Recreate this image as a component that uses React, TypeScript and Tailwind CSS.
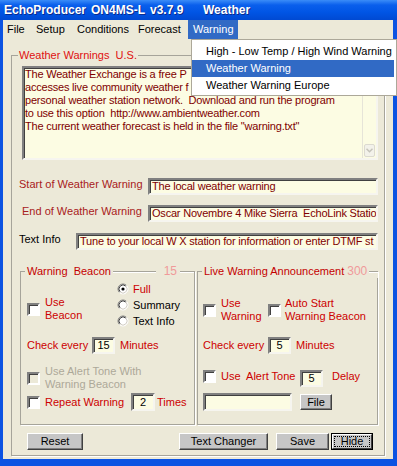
import type { ReactNode } from 'react'

function Sunken({ className = '', children }: { className?: string; children?: ReactNode }) {
  return (
    <div
      className={`border-2 border-t-[#808080] border-l-[#808080] border-r-[#f6f5ef] border-b-[#f6f5ef] bg-[#fcfce3] shadow-[inset_1px_1px_0_#404040] ${className}`}
    >
      {children}
    </div>
  )
}

function Check({ disabled = false }: { disabled?: boolean }) {
  return (
    <span
      className={`block w-[13px] h-[13px] shrink-0 border-2 border-t-[#808080] border-l-[#808080] border-r-white border-b-white shadow-[inset_1px_1px_0_#404040] ${
        disabled ? 'bg-[#ece9d8]' : 'bg-white'
      }`}
    />
  )
}

function Radio({ checked = false }: { checked?: boolean }) {
  return (
    <svg width="12" height="12" viewBox="0 0 12 12" className="shrink-0">
      <circle cx="6" cy="6" r="4.5" fill="#fff" />
      <path d="M2.46 9.54 A5 5 0 0 1 9.54 2.46" stroke="#808080" fill="none" />
      <path d="M3.17 8.83 A4 4 0 0 1 8.83 3.17" stroke="#404040" fill="none" />
      <path d="M9.54 2.46 A5 5 0 0 1 2.46 9.54" stroke="#ffffff" fill="none" />
      <path d="M8.83 3.17 A4 4 0 0 1 3.17 8.83" stroke="#d4d0c8" fill="none" />
      {checked && <circle cx="6" cy="6" r="1.6" fill="#000" />}
    </svg>
  )
}

function Btn({ className = '', children }: { className?: string; children: ReactNode }) {
  return (
    <div
      className={`flex items-center justify-center bg-[#c6c6c6] border border-t-white border-l-white border-r-[#404040] border-b-[#404040] shadow-[inset_-1px_-1px_0_#808080] text-black ${className}`}
    >
      {children}
    </div>
  )
}

function Line({ className = '' }: { className?: string }) {
  return <span className={`mt-[6px] h-[2px] border-t border-t-[#a6a49a] border-b border-b-white ${className}`} />
}

// the first two lines run on under the open Warning menu
const notes = [
  'The Weather Exchange is a free P',
  'accesses live community weather f',
  'personal weather station network.  Download and run the program',
  'to use this option  http://www.ambientweather.com',
  'The current weather forecast is held in the file "warning.txt"',
]

export default function App() {
  return (
    <div className="relative w-[397px] h-[466px] overflow-hidden flex flex-col bg-[#0c53e2] font-['Liberation_Sans',Arial,sans-serif] text-[11px] leading-[13px] text-black">
      {/* Title bar */}
      <div className="h-[20px] shrink-0 flex items-center pl-[4px] bg-[linear-gradient(180deg,#3a8cf8_0%,#0a5fec_25%,#0055e5_60%,#0049d2_100%)] text-white font-bold text-[12px] [text-shadow:1px_1px_0_#0b2b8c]">
        <span className="w-[87px]">EchoProducer</span>
        <span className="w-[59px]">ON4MS-L</span>
        <span className="w-[53px]">v3.7.9</span>
        <span>Weather</span>
      </div>

      <div className="flex-1 flex flex-col ml-[3px] mr-[4px] mb-[7px] bg-[#ece9d8]">
        {/* Menu */}
        <div className="h-[19px] shrink-0 flex items-stretch">
          <div className="w-[27px] pl-[4px] flex items-center">File</div>
          <div className="w-[41px] pl-[6px] flex items-center">Setup</div>
          <div className="w-[61px] pl-[6px] flex items-center">Conditions</div>
          <div className="w-[56px] pl-[6px] flex items-center">Forecast</div>
          <div className="w-[50px] pl-[5px] flex items-center bg-[#316ac5] text-white">Warning</div>
        </div>

        {/* Weather Warnings U.S. */}
        <fieldset className="mx-[8px] mt-[10px] min-w-0 border border-[#a6a49a] shadow-[1px_1px_0_#fff] px-[6px] pb-[5px]">
          <legend className="px-[1px] text-[#e01010] whitespace-pre">Weather Warnings  U.S.</legend>

          <Sunken className="mt-[4px] ml-[4px] h-[94px] flex">
            <div className="flex-1 overflow-hidden pl-[1px] text-[#800000] whitespace-pre tracking-[-0.2px]">
              {notes.map((n) => (
                <div key={n}>{n}</div>
              ))}
            </div>
            <div className="w-[14px] flex flex-col justify-end border-l border-l-[#e6e4d8] pb-[1px]">
              <div className="h-[13px] mx-[1px] rounded-[2px] border border-[#dcdad0] bg-[#f3f2ea] flex items-center justify-center">
                <svg width="7" height="5" viewBox="0 0 7 5">
                  <path d="M0.5 0.8 L3.5 3.8 L6.5 0.8" stroke="#c6c4ba" strokeWidth="1.5" fill="none" />
                </svg>
              </div>
            </div>
          </Sunken>

          <div className="mt-[18px] flex items-start">
            <div className="w-[130px] pl-[1px] text-[#a82020]">Start of Weather Warning</div>
            <Sunken className="flex-1 h-[17px] pl-[2px] overflow-hidden whitespace-pre tracking-[-0.2px] text-[#800000]">
              The local weather warning
            </Sunken>
          </div>
          <div className="mt-[10px] flex items-start">
            <div className="w-[130px] pl-[4px] text-[#a82020]">End of Weather Warning</div>
            <Sunken className="flex-1 h-[17px] pl-[2px] overflow-hidden whitespace-pre tracking-[-0.2px] text-[#800000]">
              Oscar Novembre 4 Mike Sierra  EchoLink Statio
            </Sunken>
          </div>
          <div className="mt-[11px] flex items-start">
            <div className="w-[58px] pl-[1px]">Text Info</div>
            <Sunken className="flex-1 h-[17px] pl-[2px] overflow-hidden whitespace-pre tracking-[-0.2px] text-[#800000]">
              Tune to your local W X station for information or enter DTMF st
            </Sunken>
          </div>

          {/* Groups */}
          <div className="mt-[15px] ml-[2px] flex gap-[2px]">
            <fieldset className="w-[175px] shrink-0 min-w-0 border border-[#a6a49a] shadow-[1px_1px_0_#fff] pb-[13px]">
              <legend className="ml-[4px] w-[169px] flex items-start">
                <span className="px-[2px] text-[#c40000] whitespace-pre">Warning  Beacon</span>
                <Line className="flex-1" />
                <span className="ml-[8px] text-[12px] text-[#f09a9a]">15</span>
                <Line className="ml-[3px] w-[14px]" />
              </legend>
              <div className="pl-[6px]">
                <div className="pt-[3px] flex">
                  <div className="w-[90px] mt-[15px] self-start flex items-center gap-[5px]">
                    <Check />
                    <div className="text-[#cc0000]">
                      Use
                      <br />
                      Beacon
                    </div>
                  </div>
                  <div className="flex flex-col">
                    {['Full', 'Summary', 'Text Info'].map((t, i) => (
                      <div key={t} className="h-[16px] flex items-center gap-[4px]">
                        <Radio checked={i === 0} />
                        <span className={i === 0 ? 'text-[#cc0000]' : ''}>{t}</span>
                      </div>
                    ))}
                  </div>
                </div>
                <div className="mt-[8px] h-[17px] flex items-center text-[#cc0000]">
                  <span className="w-[65px]">Check every</span>
                  <Sunken className="w-[23px] h-[17px] flex items-center justify-center text-black">15</Sunken>
                  <span className="ml-[5px]">Minutes</span>
                </div>
                <div className="mt-[11px] flex items-center gap-[5px]">
                  <Check disabled />
                  <div className="text-[#aca899]">
                    Use Alert Tone With
                    <br />
                    Warning Beacon
                  </div>
                </div>
                <div className="mt-[2px] h-[18px] flex items-center text-[#cc0000]">
                  <Check />
                  <span className="ml-[5px] w-[86px]">Repeat Warning</span>
                  <Sunken className="w-[24px] h-[18px] flex items-center justify-center text-black">2</Sunken>
                  <span className="ml-[2px]">Times</span>
                </div>
              </div>
            </fieldset>

            <fieldset className="flex-1 min-w-0 border border-[#a6a49a] shadow-[1px_1px_0_#fff]">
              <legend className="ml-[4px] w-[176px] flex items-start">
                <span className="px-[2px] text-[#c40000]">Live Warning Announcement</span>
                <span className="ml-[1px] text-[12px] text-[#f09a9a]">300</span>
                <Line className="ml-[2px] flex-1" />
              </legend>
              <div className="pl-[5px] text-[#cc0000]">
                <div className="pt-[19px] flex items-center">
                  <div className="w-[65px] flex items-center gap-[5px]">
                    <Check />
                    <div>
                      Use
                      <br />
                      Warning
                    </div>
                  </div>
                  <div className="flex items-center gap-[4px]">
                    <Check />
                    <div>
                      Auto Start
                      <br />
                      Warning Beacon
                    </div>
                  </div>
                </div>
                <div className="mt-[14px] h-[17px] flex items-center">
                  <span className="w-[65px]">Check every</span>
                  <Sunken className="w-[23px] h-[17px] flex items-center justify-center text-black">5</Sunken>
                  <span className="ml-[5px]">Minutes</span>
                </div>
                <div className="mt-[16px] h-[17px] flex items-start">
                  <Check />
                  <span className="ml-[5px] w-[79px] whitespace-pre">Use  Alert Tone</span>
                  <Sunken className="w-[23px] h-[17px] flex items-center justify-center text-black">5</Sunken>
                  <span className="ml-[9px]">Delay</span>
                </div>
                <div className="mt-[6px] h-[18px] flex items-center">
                  <Sunken className="w-[89px] h-[18px]" />
                  <Btn className="ml-[8px] w-[32px] h-[16px]">File</Btn>
                </div>
              </div>
            </fieldset>
          </div>

          {/* Buttons */}
          <div className="mt-[8px] flex items-center pr-[5px]">
            <Btn className="ml-[9px] w-[56px] h-[17px]">Reset</Btn>
            <Btn className="ml-auto w-[89px] h-[17px]">Text Changer</Btn>
            <Btn className="ml-[8px] w-[53px] h-[17px]">Save</Btn>
            <div className="ml-[2px] w-[42px] h-[17px] border border-black bg-[#c6c6c6] flex">
              <div className="flex-1 flex p-[1px] border border-t-white border-l-white border-r-[#404040] border-b-[#404040]">
                <div className="flex-1 flex items-center justify-center border border-dotted border-black leading-none">
                  Hide
                </div>
              </div>
            </div>
          </div>
        </fieldset>
      </div>

      {/* Warning menu */}
      <div className="absolute left-[191px] top-[39px] w-[206px] bg-white border border-[#aca899] pt-[3px] pb-[1px] pr-[2px]">
        <div className="h-[17px] flex items-center pl-[14px]">High - Low Temp / High Wind Warning</div>
        <div className="h-[17px] flex items-center pl-[14px] bg-[#316ac5] text-white">Weather Warning</div>
        <div className="h-[17px] flex items-center pl-[14px]">Weather Warning Europe</div>
      </div>
    </div>
  )
}
